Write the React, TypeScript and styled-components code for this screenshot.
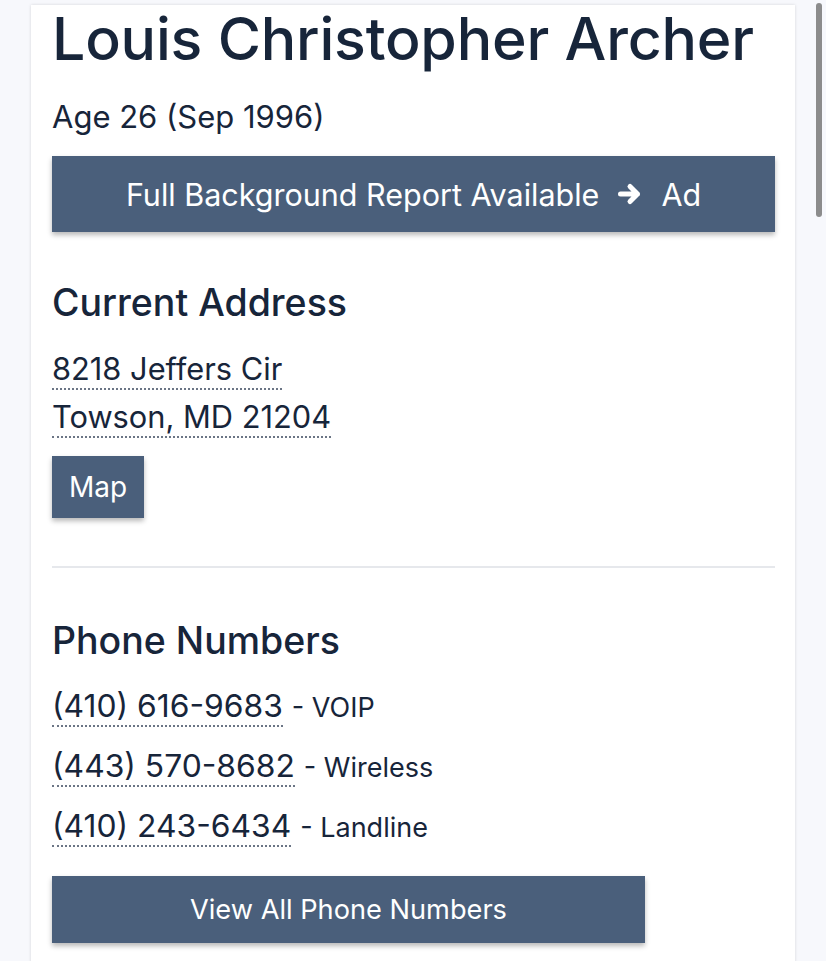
import React from "react";
import styled, { createGlobalStyle } from "styled-components";

const Global = createGlobalStyle`
  html, body { margin: 0; padding: 0; background: #f7f8fc; }
  body { font-family: Inter, "Noto Sans", "Liberation Sans", sans-serif; color: #17253a; }
`;

const Page = styled.div`
  position: relative;
  min-height: 961px;
  padding: 5px 31px 0 31px;
  box-sizing: border-box;
  width: 826px;
`;

const Card = styled.main`
  background: #fff;
  width: 764px;
  box-sizing: border-box;
  padding: 0 20px 20px 21px;
  box-shadow: 0 0 3px rgba(0, 0, 0, 0.14);
  min-height: 956px;
`;

const Title = styled.h1`
  margin: 0;
  font-size: 59px;
  font-weight: 500;
  line-height: 68px;
  letter-spacing: -0.2px;
`;

const Age = styled.p`
  margin: 24px 0 0;
  font-size: 31px;
  line-height: 40px;
`;

const Button = styled.button<{ $full?: boolean; $h: number; $w?: number; $fs?: number }>`
  display: flex;
  align-items: center;
  justify-content: center;
  gap: 18px;
  width: ${(p) => (p.$full ? "100%" : p.$w ? `${p.$w}px` : "auto")};
  height: ${(p) => p.$h}px;
  padding: 0 18px;
  border: none;
  border-radius: 0;
  background: #4a5f7b;
  color: #fff;
  font-family: inherit;
  font-size: ${(p) => p.$fs ?? 28}px;
  box-shadow: 0 3px 5px rgba(0, 0, 0, 0.28);
  cursor: pointer;
`;

const ReportButton = styled(Button)`
  margin-top: 19px;
`;

const Section = styled.section<{ $top: number }>`
  display: flex;
  flex-direction: column;
  align-items: flex-start;
  margin-top: ${(p) => p.$top}px;
`;

const Heading = styled.h2`
  margin: 0;
  font-size: 37.5px;
  font-weight: 500;
  line-height: 46px;
`;

const AddressBlock = styled.div`
  display: flex;
  flex-direction: column;
  align-items: flex-start;
  gap: 8px;
  margin-top: 24px;
`;

const Dotted = styled.a<{ $fs?: number }>`
  color: inherit;
  text-decoration: none;
  font-size: ${(p) => p.$fs ?? 30.8}px;
  line-height: 38px;
  border-bottom: 2px dotted #6b7585;
`;

const Divider = styled.hr`
  width: 100%;
  border: none;
  border-top: 2px solid #e6e8ec;
  margin: 48px 0 0;
`;

const PhoneList = styled.div`
  display: flex;
  flex-direction: column;
  gap: 20px;
  margin-top: 23px;
`;

const PhoneRow = styled.div`
  display: flex;
  align-items: baseline;
  gap: 9px;
`;

const PhoneType = styled.span`
  font-size: 27px;
`;

const MapButton = styled(Button)`
  margin-top: 18px;
`;

const ViewAllButton = styled(Button)`
  margin-top: 29px;
`;

const ArrowIcon = () => (
  <svg width="26" height="24" viewBox="0 0 26 24" fill="none" aria-hidden="true">
    <path
      d="M3.5 12H20.5M13 4.5L20.5 12L13 19.5"
      stroke="currentColor"
      strokeWidth="5"
      strokeLinecap="round"
      strokeLinejoin="round"
    />
  </svg>
);

const phones = [
  { num: "(410) 616-9683", type: "VOIP" },
  { num: "(443) 570-8682", type: "Wireless" },
  { num: "(410) 243-6434", type: "Landline" },
];

const Scrollbar = styled.div`
  position: absolute;
  left: 816px;
  top: 3px;
  width: 6px;
  height: 214px;
  border-radius: 3px;
  background: #8c8c8c;
`;

export default function App() {
  return (
    <>
      <Global />
      <Page>
        <Card>
          <Title>Louis Christopher Archer</Title>
          <Age>Age 26 (Sep 1996)</Age>
          <ReportButton $full $h={76} $fs={30.5}>
            Full Background Report Available <ArrowIcon /> Ad
          </ReportButton>

          <Section $top={48}>
            <Heading>Current Address</Heading>
            <AddressBlock>
              <Dotted href="#">8218 Jeffers Cir</Dotted>
              <Dotted href="#">Towson, MD 21204</Dotted>
            </AddressBlock>
            <MapButton $h={62} $w={92}>
              Map
            </MapButton>
          </Section>

          <Divider />

          <Section $top={50}>
            <Heading>Phone Numbers</Heading>
            <PhoneList>
              {phones.map((p) => (
                <PhoneRow key={p.num}>
                  <Dotted href="#" $fs={31.8}>
                    {p.num}
                  </Dotted>
                  <PhoneType>- {p.type}</PhoneType>
                </PhoneRow>
              ))}
            </PhoneList>
            <ViewAllButton $h={67} $w={593} $fs={27.2}>
              View All Phone Numbers
            </ViewAllButton>
          </Section>
        </Card>
        <Scrollbar />
      </Page>
    </>
  );
}
